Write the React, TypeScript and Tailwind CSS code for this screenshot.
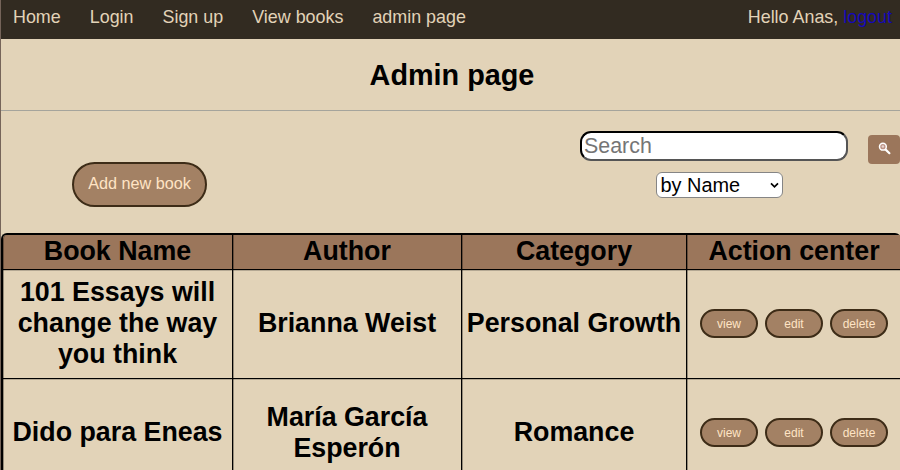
import React from "react";

const links = ["Home", "Login", "Sign up", "View books", "admin page"];
const headings = ["Book Name", "Author", "Category", "Action center"];
const books = [
  { name: "101 Essays will change the way you think", author: "Brianna Weist", category: "Personal Growth" },
  { name: "Dido para Eneas", author: "María García Esperón", category: "Romance" },
];

function Cell({ children, className = "" }: { children: React.ReactNode; className?: string }) {
  return (
    <div className={`flex items-center justify-center border-b border-l border-black pb-px text-center shadow-[0_1px_0_#00000033,inset_1px_0_0_#00000055] ${className}`}>
      {children}
    </div>
  );
}

function ActionButton({ label }: { label: string }) {
  return (
    <button className="h-[29px] w-[58px] rounded-full border-2 border-[#3d2c17] bg-[#a38164] text-[12px] leading-[22px] text-[#ffe4c4]">
      {label}
    </button>
  );
}

export default function App() {
  return (
    <div className="h-[470px] w-[900px] overflow-hidden border-l border-[#756459] bg-[#e2d3b8] font-['Liberation_Sans',Arial,sans-serif] text-black">
      <nav className="flex h-[39px] items-start justify-between bg-[#322b21] pt-[7px] pr-[8px] pl-3 text-[17.9px] leading-5 text-[#e2d3b8]">
        <div className="flex gap-[29px]">
          {links.map((link) => (
            <a key={link}>{link}</a>
          ))}
        </div>
        <div>
          Hello Anas, <a className="text-[#1508b8]">logout</a>
        </div>
      </nav>
      <header className="flex h-[72px] items-center justify-center border-b border-[#a5a49c] pt-[2px] pl-[3px] text-[28.8px] font-bold">
        <h1>Admin page</h1>
      </header>
      <section className="flex h-[122px] items-start">
        <button className="mt-[51px] ml-[71px] h-[45px] w-[135px] rounded-full border-2 border-[#3d2c17] bg-[#a38164] pb-[2px] text-[16.2px] text-[#ffe4c4]">
          Add new book
        </button>
        <div className="mt-5 ml-[372px] flex w-[269px] flex-col items-center gap-[11px] pl-px">
          <input
            placeholder="Search"
            className="h-[30px] w-[268px] rounded-[11px] border-2 border-t-black border-r-[#555] border-b-[#555] border-l-black bg-white px-[2px] text-[21.4px] leading-6 placeholder:text-[#757575]"
          />
          <div className="ml-[10px] flex h-[26px] w-[127px] items-center justify-between rounded-[6px] border border-[#858585] bg-white pr-[3px] pl-1 text-[19.9px] leading-6">
            <span>by Name</span>
            <svg width="9" height="7" viewBox="0 0 9 7" fill="none" stroke="black" strokeWidth="1.7">
              <path d="M1 1.4 4.5 4.9 8 1.4" />
            </svg>
          </div>
        </div>
        <button aria-label="Search books" className="mt-6 ml-5 flex h-[29px] w-8 items-center justify-center rounded-[4px] bg-[#9b765b]">
          <svg width="13" height="13" viewBox="0 0 13 13" fill="none" className="mb-0.5">
            <path d="M7.4 7.4 11.4 11.2" stroke="white" strokeWidth="2.2" strokeLinecap="round" />
            <circle cx="4.9" cy="4.7" r="3.4" fill="#bd9385" stroke="white" strokeWidth="1.5" />
            <circle cx="4.9" cy="4.5" r="1.3" fill="#e6d3cf" />
          </svg>
        </button>
      </section>
      <main className="h-[245px] w-[900px] rounded-t-[6px] border-t-2 border-l-2 border-black text-[26.8px] leading-[30.7px] font-bold">
        <div className="grid grid-cols-[229px_229px_225px_215px] grid-rows-[35px_109px_109px]">
          {headings.map((heading) => (
            <Cell key={heading} className="bg-[#9b765b] first:rounded-tl-[4px] first:border-l-0">
              {heading}
            </Cell>
          ))}
          {books.map((book) => (
            <React.Fragment key={book.name}>
              <Cell className="border-l-0 px-2">{book.name}</Cell>
              <Cell className="px-5">{book.author}</Cell>
              <Cell className="whitespace-nowrap">{book.category}</Cell>
              <Cell className="gap-[7px] pb-[2px] font-normal">
                <ActionButton label="view" />
                <ActionButton label="edit" />
                <ActionButton label="delete" />
              </Cell>
            </React.Fragment>
          ))}
        </div>
      </main>
    </div>
  );
}
